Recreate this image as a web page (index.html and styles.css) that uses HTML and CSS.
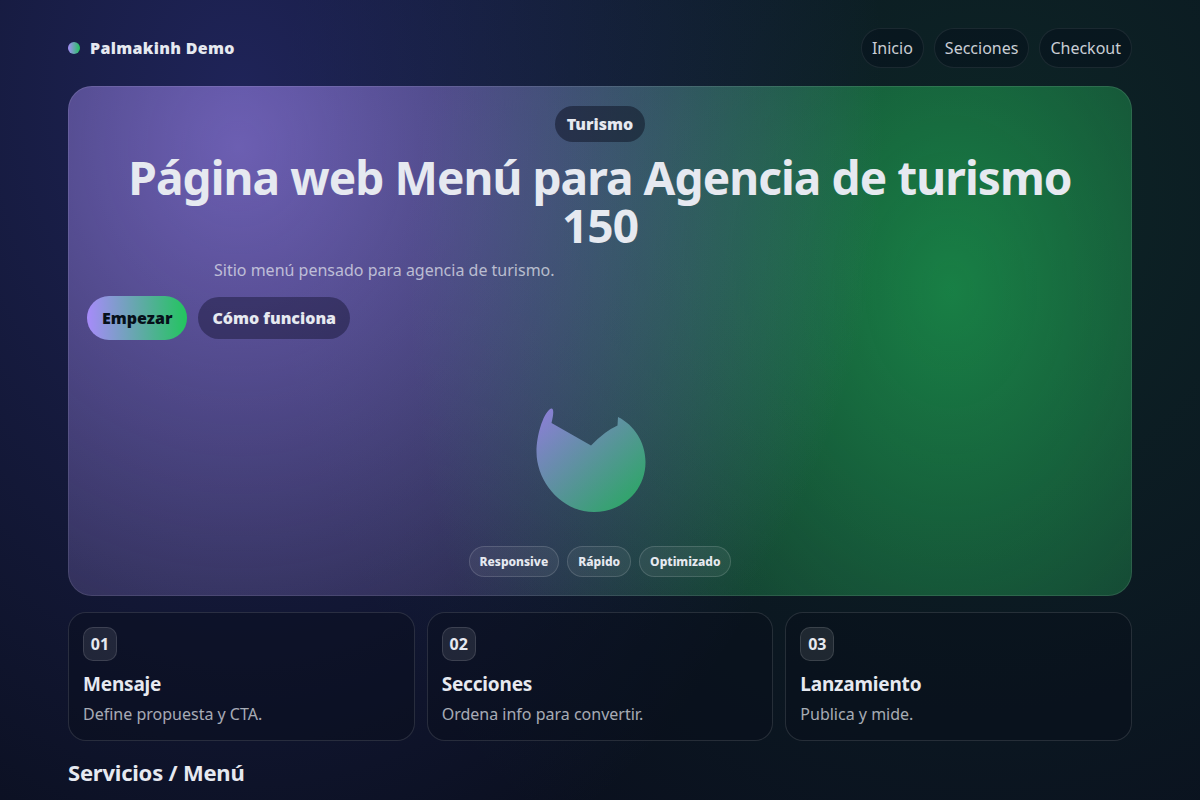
FILE: index.html
```html
<!DOCTYPE html>
<html lang="es">
<head>
<meta charset="utf-8">
<meta name="viewport" content="width=device-width, initial-scale=1">
<title>Palmakinh Demo</title>
<link rel="stylesheet" href="styles.css">
</head>
<body>
<div class="wrap">
  <header class="topbar">
    <div class="brand"><span class="dot"></span>Palmakinh Demo</div>
    <nav class="nav">
      <a href="#inicio">Inicio</a>
      <a href="#secciones">Secciones</a>
      <a href="#checkout">Checkout</a>
    </nav>
  </header>
  <main>
    <section class="hero" id="inicio">
      <span class="tag">Turismo</span>
      <h1>Página web Menú para Agencia de turismo 150</h1>
      <p class="lead">Sitio menú pensado para agencia de turismo.</p>
      <div class="actions">
        <button class="btn btn-primary" type="button">Empezar</button>
        <button class="btn" type="button">Cómo funciona</button>
      </div>
      <svg class="blob" viewBox="0 0 180 180" aria-hidden="true">
        <defs>
          <linearGradient id="blobFill" x1="0" y1="0" x2="1" y2="1">
            <stop offset="0" stop-color="#a78bfa"/>
            <stop offset="1" stop-color="#22c55e"/>
          </linearGradient>
        </defs>
        <path fill="url(#blobFill)" fill-opacity="0.78" d="M41.500 69L81 91.500Q95 77 107.500 71.500L108 63C124 71 135.500 88 135.500 108C135.500 137 112 158 84 158C51 158 26.500 127 26.500 98C26.500 81 33 61 39.500 55.500C43.500 52.500 44.500 57 41.500 69Z"/>
      </svg>
      <ul class="badges">
        <li>Responsive</li>
        <li>Rápido</li>
        <li>Optimizado</li>
      </ul>
    </section>
    <section class="steps">
      <article class="card"><span class="num">01</span><h3>Mensaje</h3><p>Define propuesta y CTA.</p></article>
      <article class="card"><span class="num">02</span><h3>Secciones</h3><p>Ordena info para convertir.</p></article>
      <article class="card"><span class="num">03</span><h3>Lanzamiento</h3><p>Publica y mide.</p></article>
    </section>
    <h2 id="secciones">Servicios / Menú</h2>
  </main>
</div>
</body>
</html>
```
FILE: styles.css
```css
* { box-sizing: border-box; }

body {
  margin: 0;
  min-height: 100vh;
  color: #e6e9f0;
  font-family: "Noto Sans", sans-serif;
  font-size: 16px;
  line-height: 22px;
  background:
    radial-gradient(760px 1000px at 20% 12%, rgba(88, 92, 246, 0.27), transparent 85%),
    radial-gradient(900px 1000px at 82% 25%, rgba(34, 197, 94, 0.12), transparent 80%),
    #0a0f1e;
}

h1, h2, h3, p, ul { margin: 0; padding: 0; }

.wrap {
  max-width: 1100px;
  margin: 0 auto;
  padding: 10px 18px 0;
}

.topbar {
  display: flex;
  justify-content: space-between;
  align-items: center;
  padding: 18px 0;
}

.brand {
  display: flex;
  align-items: center;
  gap: 10px;
  font-weight: 900;
  letter-spacing: 0.02em;
}

.dot {
  width: 12px;
  height: 12px;
  border-radius: 50%;
  background: linear-gradient(90deg, #a78bfa, #22c55e);
}

.nav { display: flex; gap: 10px; }

.nav a {
  padding: 8px 10px;
  border: 1px solid rgba(255, 255, 255, 0.08);
  border-radius: 999px;
  background: rgba(4, 10, 24, 0.35);
  color: rgba(230, 233, 240, 0.88);
  text-decoration: none;
}

.hero {
  display: flex;
  flex-direction: column;
  align-items: center;
  padding: 19px 18px 18px;
  border: 1px solid rgba(255, 255, 255, 0.1);
  border-radius: 24px;
  background:
    radial-gradient(680px 760px at 16% 12%, rgba(167, 139, 250, 0.55), transparent 95%) border-box,
    radial-gradient(570px 780px at 83% 40%, rgba(28, 190, 88, 0.58), transparent 95%) border-box,
    rgba(255, 255, 255, 0.03);
}

.tag {
  padding: 7px 12px;
  border-radius: 999px;
  background: rgba(11, 16, 32, 0.5);
  font-weight: 900;
}

h1 {
  margin-top: 11px;
  font-size: 46px;
  line-height: 48px;
  font-weight: 700;
  letter-spacing: -0.02em;
  text-align: center;
}

.lead {
  width: 100%;
  max-width: 772px;
  margin: 10px 0 15px;
  color: rgba(230, 233, 240, 0.72);
}

.actions {
  display: flex;
  align-self: stretch;
  gap: 10px;
}

.btn {
  padding: 10px 14px;
  border: 1px solid transparent;
  border-radius: 999px;
  background: rgba(14, 14, 40, 0.42);
  background-clip: padding-box;
  color: #e6e9f0;
  font: inherit;
  font-weight: 900;
}

.btn-primary {
  background: linear-gradient(90deg, #a78bfa, #22c55e) border-box;
  color: #06101a;
}

.blob {
  width: 180px;
  height: 180px;
  margin: 14px 0 12px;
}

.badges {
  display: flex;
  gap: 8px;
  list-style: none;
  font-size: 12px;
  line-height: 17px;
  font-weight: 800;
}

.badges li {
  padding: 6px 10px;
  border: 1px solid rgba(255, 255, 255, 0.14);
  border-radius: 999px;
  background: rgba(255, 255, 255, 0.06);
}

.steps {
  display: grid;
  grid-template-columns: repeat(3, 1fr);
  gap: 12px;
  margin-top: 16px;
}

.card {
  padding: 14px 14px 15px;
  border: 1px solid rgba(255, 255, 255, 0.12);
  border-radius: 18px;
  background: rgba(8, 12, 24, 0.4);
}

.num {
  display: grid;
  place-items: center;
  width: 34px;
  height: 34px;
  border: 1px solid rgba(255, 255, 255, 0.12);
  border-radius: 10px;
  background: rgba(255, 255, 255, 0.09);
  font-weight: 700;
}

h3 {
  margin: 10px 0 6px;
  font-size: 19px;
  line-height: 26px;
  letter-spacing: -0.01em;
}

.card p { color: rgba(230, 233, 240, 0.72); }

h2 {
  margin-top: 16px;
  font-size: 22px;
  line-height: 30px;
  letter-spacing: -0.01em;
}
```
